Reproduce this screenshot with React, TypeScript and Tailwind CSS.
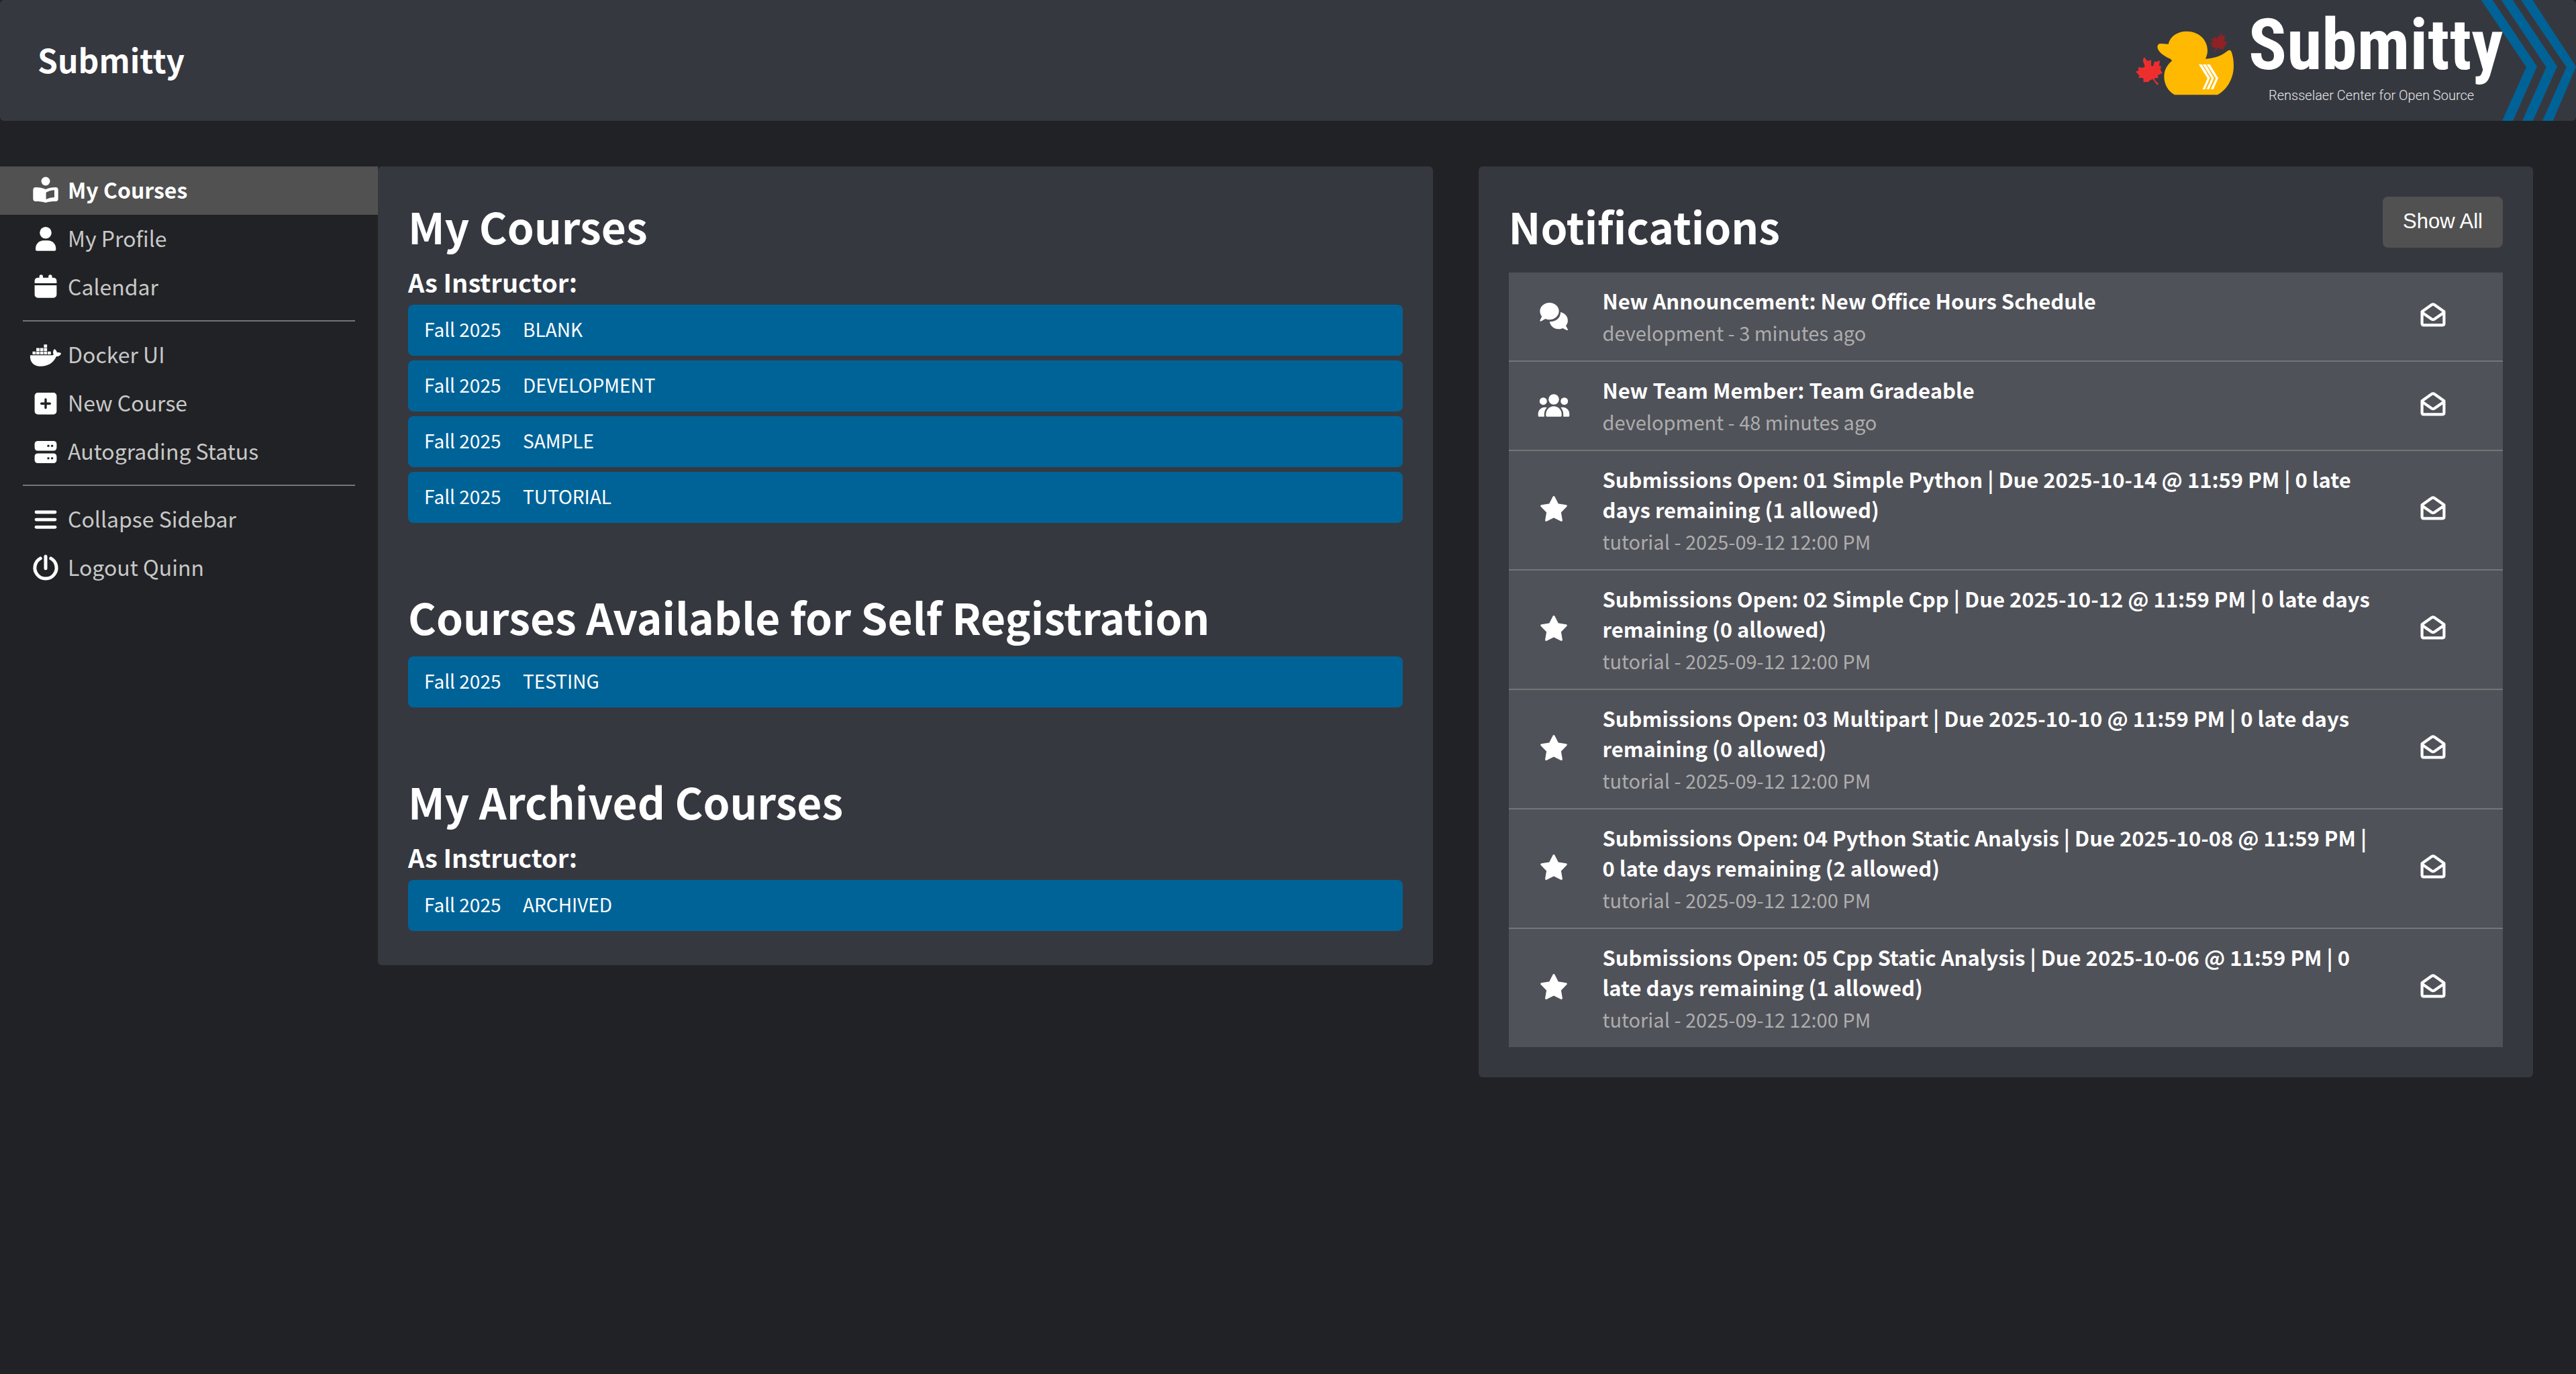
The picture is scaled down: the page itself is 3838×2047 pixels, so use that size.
import type { ReactNode } from "react";
import { FaDocker } from "react-icons/fa6";

function Icon({ children }: { children: ReactNode }) {
  return (
    <svg viewBox="0 0 48 48" className="size-12 shrink-0" fill="currentColor" aria-hidden="true">
      {children}
    </svg>
  );
}

const BookReader = () => (
  <Icon>
    <circle cx="24" cy="10" r="6.5" />
    <path
      fillRule="evenodd"
      d="M9.3 19C14 19 20 20 24 22C28 20 34 19 38.7 19a4 4 0 0 1 4 4V36a4 4 0 0 1-4 4C33 40 28 40.5 24 42C20 40.5 15 40 9.3 40a4 4 0 0 1-4-4V23a4 4 0 0 1 4-4zM24.6 26.7V37C28.5 35 33 34.200 37 34V23.200C32.500 23.400 28 24.800 24.600 26.700z"
    />
  </Icon>
);

const User = () => (
  <Icon>
    <circle cx="24" cy="14.7" r="8.8" />
    <path d="M21 26.300h6.300c6.700 0 12 5.400 12 12v1.400c0 1.100-.9 2-2 2H11c-1.100 0-2-.9-2-2v-1.400c0-6.600 5.400-12 12-12z" />
  </Icon>
);

const Calendar = () => (
  <Icon>
    <rect x="14.600" y="5.300" width="5.400" height="9" rx="2.700" />
    <rect x="28.200" y="5.300" width="5.400" height="9" rx="2.700" />
    <path d="M12.300 9.700H35.700a4.700 4.700 0 0 1 4.700 4.700V18H7.600V14.400a4.700 4.700 0 0 1 4.700-4.700zM7.600 21H40.400V35a4.700 4.700 0 0 1-4.700 4.700H12.300A4.700 4.700 0 0 1 7.600 35z" />
  </Icon>
);

const Docker = () => <FaDocker className="h-[37px] w-12 shrink-0" aria-hidden="true" />;

const SquarePlus = () => (
  <Icon>
    <path
      fillRule="evenodd"
      d="M12.300 8H35.700a4.700 4.700 0 0 1 4.700 4.700V35.700a4.700 4.700 0 0 1-4.700 4.700H12.300a4.700 4.700 0 0 1-4.700-4.700V12.700A4.700 4.700 0 0 1 12.300 8zM22.300 18V22.600H17.700a1.700 1.700 0 0 0 0 3.400H22.300V30.600a1.700 1.700 0 0 0 3.400 0V26H30.300a1.700 1.700 0 0 0 0-3.400H25.700V18a1.700 1.700 0 0 0-3.400 0z"
    />
  </Icon>
);

const Server = () => (
  <Icon>
    <rect x="7.6" y="8" width="32.8" height="14.500" rx="4.500" />
    <rect x="7.6" y="26.500" width="32.8" height="14.500" rx="4.500" />
    <g fill="#212225">
      <circle cx="28" cy="15.300" r="1.700" />
      <circle cx="33.600" cy="15.300" r="1.700" />
      <circle cx="28" cy="33.700" r="1.700" />
      <circle cx="33.600" cy="33.700" r="1.700" />
    </g>
  </Icon>
);

const Bars = () => (
  <Icon>
    <rect x="7.6" y="10.600" width="32.8" height="4.800" rx="2.400" />
    <rect x="7.6" y="21.700" width="32.8" height="4.800" rx="2.400" />
    <rect x="7.6" y="32.900" width="32.8" height="4.800" rx="2.400" />
  </Icon>
);

const Power = () => (
  <Icon>
    <path
      d="M16.200 9.900A16.100 16.100 0 1 0 31.800 9.900M24 6.900V24.700"
      fill="none"
      stroke="currentColor"
      strokeWidth="5"
      strokeLinecap="round"
    />
  </Icon>
);

const Comments = () => (
  <Icon>
    <path d="M17.600 3C25.500 3 31.700 8.600 31.700 15.600S25.500 28.300 17.600 28.300C15.400 28.300 13.300 27.900 11.500 27.100L5.200 30.600C4 31.100 3.200 30.200 3.500 29.200L6.200 23.500C4.400 21.300 3.400 18.600 3.400 15.600C3.400 8.600 9.700 3 17.600 3z" />
    <path d="M34 17C40.500 18.500 44.900 23.500 44.900 29.500C44.900 32.500 43.800 35 42 37.200L44.800 42.500C45.200 43.600 44.500 44.400 43.400 44L37.500 41C35.500 41.800 33.200 42.300 31 42.300C24.300 42.300 19 37.800 17.700 31.300C27 31.500 34.500 25.500 34 17z" />
  </Icon>
);

const Users = () => (
  <Icon>
    <circle cx="24" cy="14" r="7.800" />
    <circle cx="8.300" cy="16.700" r="5.500" />
    <circle cx="39.700" cy="16.700" r="5.500" />
    <path d="M24 24.200c6.500 0 11.700 5.200 11.700 11.700v2.400c0 .8-.6 1.400-1.400 1.400H13.700c-.8 0-1.400-.6-1.400-1.400v-2.400c0-6.500 5.200-11.700 11.700-11.700z" />
    <path d="M13.700 26.200C11.200 28.700 9.800 32.200 9.800 35.900V39.700H2.200c-.9 0-1.500-.6-1.500-1.500V35.500C.7 29.500 6.500 24.300 13.700 26.200zM34.300 26.200C36.800 28.700 38.200 32.200 38.200 35.900V39.700H45.800c.9 0 1.500-.6 1.500-1.500V35.500C47.300 29.500 41.500 24.300 34.300 26.200z" />
  </Icon>
);

const Star = () => (
  <Icon>
    <path
      d="M24 4.500L29.700 15.800L42.300 17.800L33.300 26.900L35.400 39.300L24 33.600L12.600 39.300L14.700 26.900L5.700 17.800L18.300 15.800z"
      stroke="currentColor"
      strokeWidth="3"
      strokeLinejoin="round"
    />
  </Icon>
);

const EnvelopeOpen = () => (
  <Icon>
    <path
      d="M7.600 16.200L22 6Q24 4.700 26 6L40.400 16.200V34.300a2 2 0 0 1-2 2H9.600a2 2 0 0 1-2-2zM7.600 17.500L22 27.400Q24 28.700 26 27.400L40.400 17.500"
      fill="none"
      stroke="currentColor"
      strokeWidth="4.200"
      strokeLinejoin="round"
    />
  </Icon>
);

function Logo() {
  return (
    <svg viewBox="0 0 678 180" className="h-[180px] w-[678px] shrink-0" role="img" aria-label="Submitty, Rensselaer Center for Open Source">
      <g fill="#006398">
        <path d="M536.700 0H553.700L620 99.300L584 180H568L604 100z" />
        <path d="M566.700 0H583.700L650 99.300L613.700 180H598L633.700 100z" />
        <path d="M596 0H613.300L678 99.300L643.700 180H628L663.700 100z" />
      </g>
      <g transform="translate(10 30) scale(.3333)">
        <path
          fill="#ffb900"
          d="M210 334C180 318 163 285 163 252C163 222 176 200 198 182C195 176 192 174 188 172C160 160 134 140 133 120C133 110 140 104 149 105L182 107C190 72 224 50 264 50C318 50 357 88 357 136C357 150 353 162 348 173C388 172 422 158 445 139C455 131 461 134 464 142C470 158 474 180 474 203C474 262 444 310 402 334z"
        />
        <g fill="#fff">
          <path d="M318 198H332L368 259L346 309H335L357 260z" />
          <path d="M336 198H350L386 259L364 309H353L375 260z" />
          <path d="M354 198H368L405 259L383 309H372L394 260z" />
        </g>
        <path
          fill="#ee2e2e"
          d="M73 165L89 183L105 178L105 203L113 206L121 184L129 187L144 180L141 204L150 206L146 222L156 236L143 243L134 246L138 257L118 260L124 271L138 284V288H130L112 263L98 270L93 276L70 277L71 262L64 257L48 259L53 248L36 230L49 225L47 211L68 213L77 207L68 180z"
        />
        <path
          fill="#8f2224"
          d="M418 58L425 71L435 69L433 84L429 95L437 94L448 98L439 106L441 113L431 117L429 131L417 130L402 124L396 135L389 143L386 140L397 124L384 123L374 114L376 110L370 100L382 97L371 80L384 84L387 76L393 75L400 84L403 70L411 72z"
        />
      </g>
      <text x="190" y="103" fill="#fff" className="font-['Liberation_Sans_Narrow','Roboto_Condensed',cursive] text-[106px] font-bold">
        Submitty
      </text>
      <text x="220" y="149" fill="#e8e8e8" className="font-[Roboto,sans-serif] text-[20px] font-light">
        Rensselaer Center for Open Source
      </text>
    </svg>
  );
}

type NavItem = { label: string; icon: ReactNode; active?: boolean; button?: boolean };

const navGroups: NavItem[][] = [
  [
    { label: "My Courses", icon: <BookReader />, active: true },
    { label: "My Profile", icon: <User /> },
    { label: "Calendar", icon: <Calendar /> },
  ],
  [
    { label: "Docker UI", icon: <Docker /> },
    { label: "New Course", icon: <SquarePlus /> },
    { label: "Autograding Status", icon: <Server /> },
  ],
  [
    { label: "Collapse Sidebar", icon: <Bars />, button: true },
    { label: "Logout Quinn", icon: <Power /> },
  ],
];

function NavRow({ item }: { item: NavItem }) {
  const inner = (
    <>
      {item.icon}
      <span className={item.active ? "pb-1 font-bold" : "pb-1 text-[#c8c8c8]"}>{item.label}</span>
    </>
  );
  const base = "flex h-[72px] w-full items-center gap-[9px] pl-11 text-left text-[32px]";
  if (item.button) {
    return (
      <button type="button" className={base}>
        {inner}
      </button>
    );
  }
  return (
    <a href="#" aria-current={item.active ? "page" : undefined} className={item.active ? `${base} bg-[#515151]` : base}>
      {inner}
    </a>
  );
}

function Sidebar() {
  return (
    <nav className="w-[563px] shrink-0">
      {navGroups.map((group, i) => (
        <div key={i}>
          {i > 0 && <hr className="mx-[34px] mt-[13px] mb-[14px] border-t-2 border-[#757575]" />}
          <ul>
            {group.map((item) => (
              <li key={item.label}>
                <NavRow item={item} />
              </li>
            ))}
          </ul>
        </div>
      ))}
    </nav>
  );
}

function Heading({ children }: { children: ReactNode }) {
  return <h1 className="text-[64px] leading-[80px] font-bold">{children}</h1>;
}

function CourseSection({ title, role, courses }: { title: string; role?: string; courses: string[] }) {
  return (
    <section>
      <Heading>{title}</Heading>
      {role && <h2 className="mt-5 -mb-2.5 text-[38px] leading-[48px] font-bold">{role}</h2>}
      <ul className="mt-5 flex flex-col gap-[7px]">
        {courses.map((course) => (
          <li key={course}>
            <a href="#" className="flex h-[76px] items-center rounded-lg bg-[#006398] pb-1 pl-6 text-[28px]">
              <span className="w-[147px]">Fall 2025</span>
              <span>{course}</span>
            </a>
          </li>
        ))}
      </ul>
    </section>
  );
}

const notifications = [
  { icon: <Comments />, title: "New Announcement: New Office Hours Schedule", meta: "development - 3 minutes ago" },
  { icon: <Users />, title: "New Team Member: Team Gradeable", meta: "development - 48 minutes ago" },
  {
    icon: <Star />,
    title: "Submissions Open: 01 Simple Python | Due 2025-10-14 @ 11:59 PM | 0 late days remaining (1 allowed)",
    meta: "tutorial - 2025-09-12 12:00 PM",
  },
  {
    icon: <Star />,
    title: "Submissions Open: 02 Simple Cpp | Due 2025-10-12 @ 11:59 PM | 0 late days remaining (0 allowed)",
    meta: "tutorial - 2025-09-12 12:00 PM",
  },
  {
    icon: <Star />,
    title: "Submissions Open: 03 Multipart | Due 2025-10-10 @ 11:59 PM | 0 late days remaining (0 allowed)",
    meta: "tutorial - 2025-09-12 12:00 PM",
  },
  {
    icon: <Star />,
    title: "Submissions Open: 04 Python Static Analysis | Due 2025-10-08 @ 11:59 PM | 0 late days remaining (2 allowed)",
    meta: "tutorial - 2025-09-12 12:00 PM",
  },
  {
    icon: <Star />,
    title: "Submissions Open: 05 Cpp Static Analysis | Due 2025-10-06 @ 11:59 PM | 0 late days remaining (1 allowed)",
    meta: "tutorial - 2025-09-12 12:00 PM",
  },
];

function Notifications() {
  return (
    <section className="flex-1 rounded-md bg-[#363840] p-[45px]">
      <div className="flex items-start justify-between">
        <div className="pt-[3px]">
          <Heading>Notifications</Heading>
        </div>
        <button
          type="button"
          className="h-[76px] rounded-lg bg-[#515151] px-[30px] pb-1 font-['Liberation_Sans',sans-serif] text-[31px] leading-none"
        >
          Show All
        </button>
      </div>
      <ul className="mt-[30px] divide-y-2 divide-[#757575] bg-[#505259]">
        {notifications.map((n) => (
          <li key={n.title} className="flex items-center pr-20 pl-[43px]">
            {n.icon}
            <a href="#" className="mr-[62px] ml-[49px] flex-1 pt-[19px] pb-[22px]">
              <p className="text-[31px] leading-[45px] font-bold">{n.title}</p>
              <p className="mt-[5px] text-[29px] leading-[40px] text-[#adadad]">{n.meta}</p>
            </a>
            <button type="button" aria-label="Mark as seen">
              <EnvelopeOpen />
            </button>
          </li>
        ))}
      </ul>
    </section>
  );
}

export default function App() {
  return (
    <div className="min-h-screen bg-[#212225] font-['Noto_Sans_CJK_SC',sans-serif] text-white">
      <header className="flex items-center justify-between overflow-hidden rounded-md bg-[#363840] pl-14">
        <a href="#" className="pb-1 text-[48px] leading-[72px] font-bold">
          Submitty
        </a>
        <Logo />
      </header>
      <div className="flex items-start pt-[68px] pr-16">
        <Sidebar />
        <main className="flex flex-1 items-start gap-[68px]">
          <div className="flex flex-1 flex-col gap-[99px] rounded-md bg-[#363840] px-[45px] pt-12 pb-[51px]">
            <CourseSection title="My Courses" role="As Instructor:" courses={["BLANK", "DEVELOPMENT", "SAMPLE", "TUTORIAL"]} />
            <CourseSection title="Courses Available for Self Registration" courses={["TESTING"]} />
            <CourseSection title="My Archived Courses" role="As Instructor:" courses={["ARCHIVED"]} />
          </div>
          <Notifications />
        </main>
      </div>
    </div>
  );
}
